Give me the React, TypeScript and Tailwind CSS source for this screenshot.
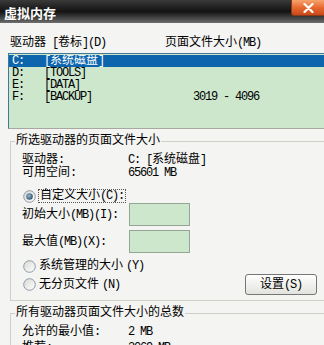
import React from "react";

const drives = [
  { letter: "C:", label: "[系统磁盘]", size: "", selected: true },
  { letter: "D:", label: "[TOOLS]", size: "" },
  { letter: "E:", label: "[DATA]", size: "" },
  { letter: "F:", label: "[BACKUP]", size: "3019 - 4096" },
];

// latin runs in SimSun are half width (6px), so tighten the mono font
function T({ s }: { s: string }) {
  const parts = s.split(/([\x00-\xff]+)/).filter(Boolean);
  return (
    <>
      {parts.map((p, i) =>
        /[\x00-\xff]/.test(p[0]) ? (
          <span key={i} className="tracking-[-1.2px]">
            {p}
          </span>
        ) : (
          <span key={i}>{p}</span>
        ),
      )}
    </>
  );
}

function Radio({ checked }: { checked?: boolean }) {
  return (
    <svg width="13" height="13" viewBox="0 0 13 13" className="shrink-0">
      <defs>
        <linearGradient id="rbg" x1="0" y1="0" x2="1" y2="1">
          <stop offset="0%" stopColor="#d8d8d4" />
          <stop offset="100%" stopColor="#ffffff" />
        </linearGradient>
        <radialGradient id="rdot" cx="0.4" cy="0.4" r="0.6">
          <stop offset="0%" stopColor="#9fb8cc" />
          <stop offset="100%" stopColor="#2e5878" />
        </radialGradient>
      </defs>
      <circle cx="6.5" cy="6.5" r="5.8" fill="url(#rbg)" stroke="#8d9aa6" strokeWidth="1" />
      {checked ? <circle cx="6.5" cy="6.5" r="3.3" fill="url(#rdot)" /> : null}
    </svg>
  );
}

function GroupBox({ title, children }: { title: string; children: React.ReactNode }) {
  return (
    <fieldset className="ml-[10px] w-[340px] border border-[#d0d0c8]">
      <legend className="ml-[4px] px-[1px] leading-[12px]">
        <T s={title} />
      </legend>
      <div className="pl-[11px] pt-[6px]">{children}</div>
    </fieldset>
  );
}

export default function App() {
  return (
    <div
      className="w-[324px] h-[345px] overflow-hidden bg-[#f4f4f2] text-[12px] leading-[12px] text-black whitespace-pre"
      style={{ fontFamily: '"Liberation Mono", "Noto Sans CJK SC", monospace' }}
    >
      {/* title bar */}
      <div className="flex h-[23px] items-start justify-between bg-gradient-to-b from-[#3a3a3a] via-[#141414] to-[#6e6e6e]">
        <div
          className="pl-[4px] pt-[6px] text-[13px] font-bold leading-[13px] text-white"
          style={{ fontFamily: '"Noto Sans CJK SC", sans-serif' }}
        >
          虚拟内存
        </div>
        <div className="flex h-[16px] w-[33px] items-center justify-center rounded-bl-[3px] border-l border-b border-[#8a3a16] bg-gradient-to-b from-[#f7a36e] via-[#e8692e] to-[#c9481a]">
          <svg width="11" height="10" viewBox="0 0 11 10">
            <path d="M1.5 1 L9.5 9 M9.5 1 L1.5 9" stroke="#ffffff" strokeWidth="2.2" strokeLinecap="round" />
          </svg>
        </div>
      </div>

      {/* list header */}
      <div className="flex pl-[10px] pt-[14px]">
        <span className="w-[155px]">
          <T s="驱动器 [卷标](D)" />
        </span>
        <span>
          <T s="页面文件大小(MB)" />
        </span>
      </div>

      {/* drive list */}
      <div className="ml-[8px] mt-[4px] h-[76px] w-[340px] border border-[#3f7898] border-b-[#a8a8a0] bg-[#cde7cd] pt-[1px]">
        {drives.map((d) => (
          <div
            key={d.letter}
            className={`flex h-[12px] items-center overflow-hidden pl-[3px] ${d.selected ? "bg-[#0d65ae] text-white" : ""}`}
          >
            <span className="w-[32px]">
              <T s={d.letter} />
            </span>
            <span className="w-[149px]">
              <T s={d.label} />
            </span>
            <span>
              <T s={d.size} />
            </span>
          </div>
        ))}
      </div>

      <div className="mt-[6px]">
        <GroupBox title="所选驱动器的页面文件大小">
          <div className="flex h-[13px] items-center">
            <span className="w-[106px]">
              <T s="驱动器:" />
            </span>
            <span>
              <T s="C: [系统磁盘]" />
            </span>
          </div>
          <div className="flex h-[13px] items-center">
            <span className="w-[106px]">
              <T s="可用空间:" />
            </span>
            <span>
              <T s="65601 MB" />
            </span>
          </div>

          <div className="mt-[10px] flex h-[14px] items-center gap-[2px] pl-[1px]">
            <Radio checked />
            <span className="border border-dotted border-[#555] px-[1px]">
              <T s="自定义大小(C):" />
            </span>
          </div>

          <div className="flex h-[23px] items-center">
            <span className="w-[107px]">
              <T s="初始大小(MB)(I):" />
            </span>
            <div className="h-[23px] w-[61px] border border-[#95a595] bg-[#cde7cd]" />
          </div>
          <div className="mt-[4px] flex h-[23px] items-center">
            <span className="w-[107px]">
              <T s="最大值(MB)(X):" />
            </span>
            <div className="h-[23px] w-[61px] border border-[#95a595] bg-[#cde7cd]" />
          </div>

          <div className="mt-[5px] flex h-[16px] items-center gap-[3px] pl-[1px]">
            <Radio />
            <T s="系统管理的大小(Y)" />
          </div>

          <div className="flex h-[21px] items-center">
            <div className="flex w-[223px] items-center gap-[3px] pl-[1px]">
              <Radio />
              <T s="无分页文件(N)" />
            </div>
            <div className="flex h-[21px] w-[72px] items-center justify-center rounded-[3px] border border-[#767676] bg-gradient-to-b from-[#ffffff] to-[#e2e2de]">
              <T s="设置(S)" />
            </div>
          </div>
          <div className="h-[5px]" />
        </GroupBox>
      </div>

      <div className="mt-[6px]">
        <GroupBox title="所有驱动器页面文件大小的总数">
          <div className="flex h-[13px] items-center">
            <span className="w-[106px]">
              <T s="允许的最小值:" />
            </span>
            <span>
              <T s="2 MB" />
            </span>
          </div>
          <div className="mt-[3px] flex h-[13px] items-center">
            <span className="w-[106px]">
              <T s="推荐:" />
            </span>
            <span>
              <T s="3069 MB" />
            </span>
          </div>
        </GroupBox>
      </div>
    </div>
  );
}
